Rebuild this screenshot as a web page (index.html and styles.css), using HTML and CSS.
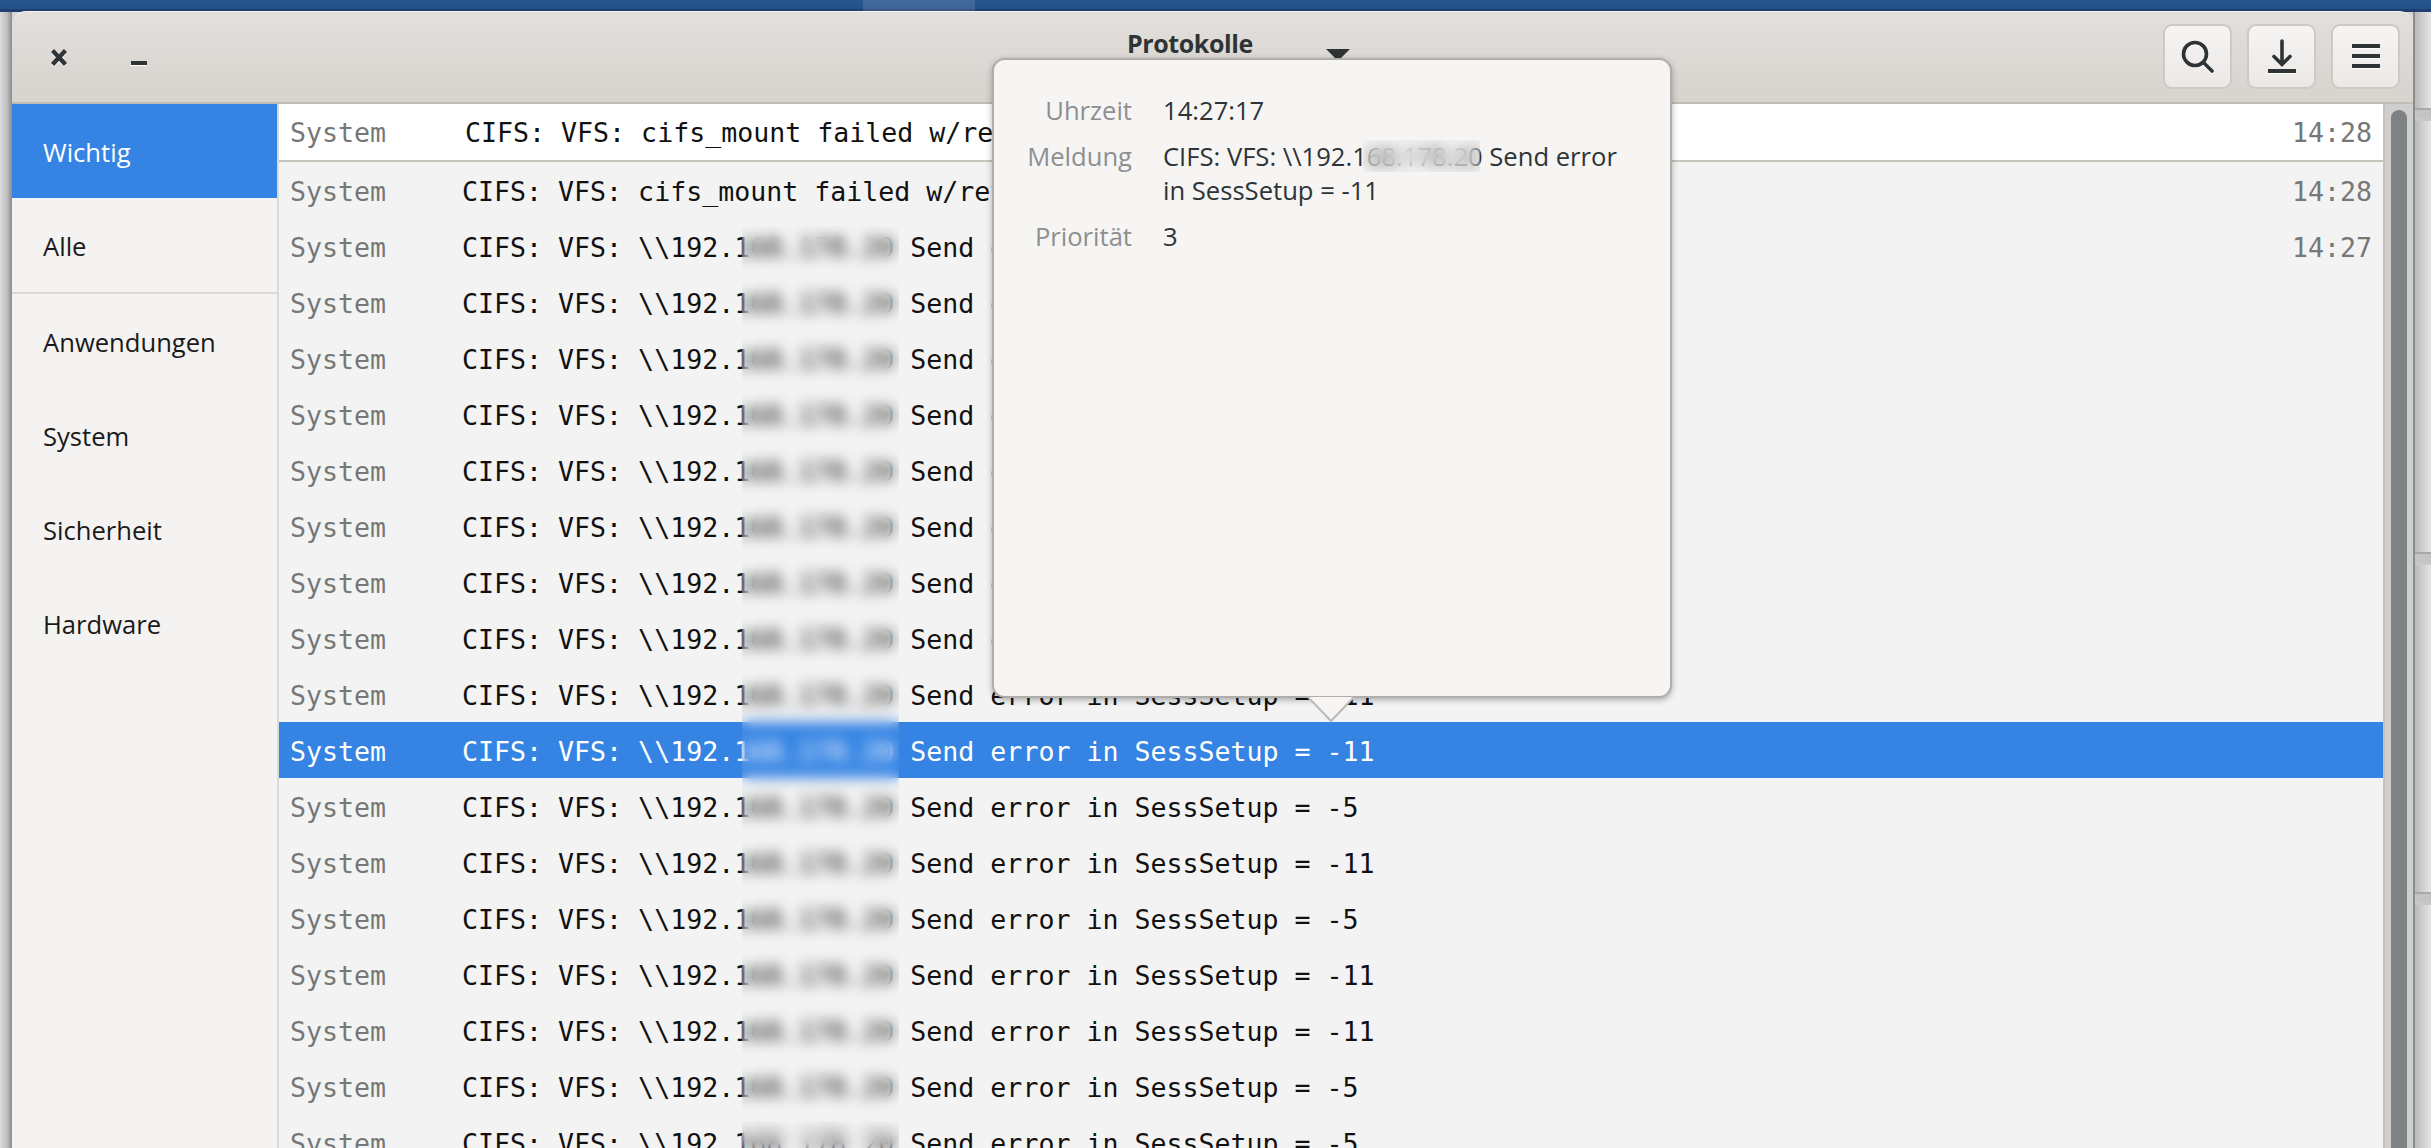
FILE: index.html
```html
<!DOCTYPE html>
<html lang="de">
<head>
<meta charset="utf-8">
<title>Protokolle</title>
<link rel="stylesheet" href="styles.css">
</head>
<body>
<div class="topbar"></div>
<div class="desk">
  <div class="edge-left"></div>
  <div class="window">
    <header class="header">
      <div class="wm">
        <svg class="wm-icon" width="16" height="17" viewBox="0 0 16 17"><path d="M1.5 1.5 14.5 15.5M14.5 1.5 1.5 15.5" fill="none" stroke="#2e3436" stroke-width="4.4"/></svg>
        <svg class="wm-icon" width="16" height="17" viewBox="0 0 16 17"><rect x="0" y="12" width="16" height="4" fill="#2e3436"/></svg>
      </div>
      <div class="title">Protokolle</div>
      <svg class="title-arrow" width="24" height="12" viewBox="0 0 24 12"><path d="M0 0H24L12 12Z" fill="#2e3436"/></svg>
      <div class="actions">
        <button class="btn"><svg width="36" height="36" viewBox="0 0 36 36"><circle cx="15" cy="15" r="11.5" fill="none" stroke="#2e3436" stroke-width="3.6"/><path d="M23.5 23.5 32 32" fill="none" stroke="#2e3436" stroke-width="3.6" stroke-linecap="round"/></svg></button>
        <button class="btn"><svg width="36" height="36" viewBox="0 0 36 36"><path d="M18 2V25M10 17.5 18 25.5 26 17.5" fill="none" stroke="#2e3436" stroke-width="3.6" stroke-linecap="round"/><rect x="4" y="30" width="28" height="4" fill="#2e3436"/></svg></button>
        <button class="btn"><svg width="36" height="36" viewBox="0 0 36 36"><path d="M4 5H32V9H4ZM4 15H32V19H4ZM4 25H32V29H4Z" fill="#2e3436"/></svg></button>
      </div>
    </header>
    <div class="main">
      <nav class="sidebar">
        <div class="side-item active">Wichtig</div>
        <div class="side-item">Alle</div>
        <div class="side-sep"></div>
        <div class="side-item">Anwendungen</div>
        <div class="side-item">System</div>
        <div class="side-item">Sicherheit</div>
        <div class="side-item">Hardware</div>
      </nav>
      <section class="list">
        <div class="row top"><span class="app">System</span><span class="msg">CIFS: VFS: cifs_mount failed w/return code = -11</span><span class="time">14:28</span></div>
        <div class="row"><span class="app">System</span><span class="msg">CIFS: VFS: cifs_mount failed w/return code = -11</span><span class="time">14:28</span></div>
        <div class="row"><span class="app">System</span><span class="msg">CIFS: VFS: \\192.168.178.20 Send error in SessSetup = -11</span><span class="time">14:27</span></div>
        <div class="row"><span class="app">System</span><span class="msg">CIFS: VFS: \\192.168.178.20 Send error in SessSetup = -11</span></div>
        <div class="row"><span class="app">System</span><span class="msg">CIFS: VFS: \\192.168.178.20 Send error in SessSetup = -5</span></div>
        <div class="row"><span class="app">System</span><span class="msg">CIFS: VFS: \\192.168.178.20 Send error in SessSetup = -11</span></div>
        <div class="row"><span class="app">System</span><span class="msg">CIFS: VFS: \\192.168.178.20 Send error in SessSetup = -5</span></div>
        <div class="row"><span class="app">System</span><span class="msg">CIFS: VFS: \\192.168.178.20 Send error in SessSetup = -11</span></div>
        <div class="row"><span class="app">System</span><span class="msg">CIFS: VFS: \\192.168.178.20 Send error in SessSetup = -5</span></div>
        <div class="row"><span class="app">System</span><span class="msg">CIFS: VFS: \\192.168.178.20 Send error in SessSetup = -11</span></div>
        <div class="row"><span class="app">System</span><span class="msg">CIFS: VFS: \\192.168.178.20 Send error in SessSetup = -11</span></div>
        <div class="row selected"><span class="app">System</span><span class="msg">CIFS: VFS: \\192.168.178.20 Send error in SessSetup = -11</span></div>
        <div class="row"><span class="app">System</span><span class="msg">CIFS: VFS: \\192.168.178.20 Send error in SessSetup = -5</span></div>
        <div class="row"><span class="app">System</span><span class="msg">CIFS: VFS: \\192.168.178.20 Send error in SessSetup = -11</span></div>
        <div class="row"><span class="app">System</span><span class="msg">CIFS: VFS: \\192.168.178.20 Send error in SessSetup = -5</span></div>
        <div class="row"><span class="app">System</span><span class="msg">CIFS: VFS: \\192.168.178.20 Send error in SessSetup = -11</span></div>
        <div class="row"><span class="app">System</span><span class="msg">CIFS: VFS: \\192.168.178.20 Send error in SessSetup = -11</span></div>
        <div class="row"><span class="app">System</span><span class="msg">CIFS: VFS: \\192.168.178.20 Send error in SessSetup = -5</span></div>
        <div class="row"><span class="app">System</span><span class="msg">CIFS: VFS: \\192.168.178.20 Send error in SessSetup = -5</span></div>
        <div class="list-blur"></div>
        <div class="list-blur tail"></div>
      </section>
      <div class="scroll"><div class="thumb"></div></div>
    </div>
  </div>
  <div class="edge-right">
    <div class="other o1"></div>
    <div class="other o2"></div>
    <div class="other o3"></div>
  </div>
</div>
<aside class="popover">
  <dl class="details">
    <dt>Uhrzeit</dt><dd>14:27:17</dd>
    <dt>Meldung</dt><dd>CIFS: VFS: \\192.168.178.20 Send error<br>in SessSetup = -11</dd>
    <dt>Priorität</dt><dd>3</dd>
  </dl>
  <div class="pop-blur"></div>
  <svg class="pop-arrow" width="50" height="26" viewBox="0 0 50 26"><path d="M2 0 25 24 48 0" fill="#f6f5f4" stroke="#bdbab6" stroke-width="2"/></svg>
</aside>
</body>
</html>
```
FILE: styles.css
```css
* { box-sizing: border-box; }
html, body { margin: 0; height: 100%; }
body {
  position: relative;
  width: 2431px;
  height: 1148px;
  overflow: hidden;
  display: flex;
  flex-direction: column;
  background: #d6d6d6;
  font-family: "Open Sans", "Noto Sans", sans-serif;
  font-size: 25.6px;
  color: #2e3436;
}
.topbar {
  height: 12px;
  flex: none;
  background:
    linear-gradient(90deg, transparent 863px, rgba(255, 255, 255, 0.12) 863px, rgba(255, 255, 255, 0.12) 975px, transparent 975px),
    linear-gradient(#28548f, #24508a 75%, #1f3f6e 75%);
}
.desk { flex: 1; display: flex; min-height: 0; }
.edge-left {
  width: 12px;
  flex: none;
  background: linear-gradient(90deg, #dcdcdc, #bdbdbd 60%, #8a8a8a);
}
.edge-right {
  position: relative;
  width: 18px;
  flex: none;
  border-left: 2px solid #8d8d8d;
  background: linear-gradient(90deg, #b9b9b9, #e6e6e6);
}
.other {
  position: absolute;
  left: 0;
  right: 0;
  height: 13px;
  border-top: 2px solid #a8a8a8;
  border-bottom: 2px solid #c9c9c9;
  background: #c4c4c4;
}
.o1 { top: 96px; }
.o2 { top: 540px; }
.o3 { top: 880px; }
.window {
  width: 2401px;
  flex: none;
  display: flex;
  flex-direction: column;
  min-height: 0;
}
.header {
  position: relative;
  height: 93px;
  flex: none;
  display: flex;
  align-items: flex-start;
  margin-top: -1px;
  border-top: 1px solid #f4f3f1;
  border-bottom: 2px solid #c2bcb5;
  border-radius: 14px 14px 0 0;
  background: linear-gradient(#e2dfdc, #d7d3ce);
}
.wm {
  width: 1115px;
  flex: none;
  display: flex;
  gap: 64px;
  padding: 37px 0 0 39px;
}
.wm-icon { display: block; filter: drop-shadow(0 1.5px 0 #fff); }
.title {
  margin-top: 14px;
  font-size: 25px;
  line-height: 34px;
  font-weight: 700;
  letter-spacing: -0.4px;
}
.title-arrow { margin: 37px 0 0 73px; flex: none; }
.actions {
  margin: 12px 13px 0 auto;
  display: flex;
  gap: 15px;
}
.btn {
  width: 69px;
  height: 65px;
  padding: 0;
  display: flex;
  align-items: center;
  justify-content: center;
  border: 2px solid #cfc9c3;
  border-radius: 9px;
  background: linear-gradient(#f6f5f4, #ebe8e5);
}
.btn svg { filter: drop-shadow(0 1px 0 #fff); }
.main { flex: 1; display: flex; min-height: 0; }
.sidebar {
  width: 267px;
  flex: none;
  border-right: 2px solid #dcdad7;
  background: #f4f3f2;
}
.side-item {
  height: 94px;
  padding: 2px 0 0 31px;
  display: flex;
  align-items: center;
  color: #1a1a1a;
}
.side-item.active { background: #3584e4; color: #fff; }
.side-sep { height: 2px; background: #dcdad7; }
.list {
  position: relative;
  flex: 1;
  min-width: 0;
  background: #f3f3f3;
  font-family: "DejaVu Sans Mono", monospace;
  font-size: 26.6px;
  overflow: hidden;
}
.row {
  height: 56px;
  padding: 2px 11px 0;
  display: flex;
  align-items: center;
  white-space: pre;
  color: #111;
}
.row.top {
  height: 58px;
  padding-top: 2px;
  padding-bottom: 2px;
  background: #fff;
  border-bottom: 2px solid #c8c3bc;
}
.app { width: 172px; flex: none; color: #777; }
.row.top .app { width: 175px; }
.msg { flex: none; }
.time { margin-left: auto; color: #777; }
.row.selected { background: #3584e4; color: #fff; }
.row.selected .app { color: #fff; }
.list-blur {
  position: absolute;
  left: 463px;
  width: 157px;
  top: 122px;
  bottom: 0;
  backdrop-filter: blur(7px);
}
.list-blur.tail { top: auto; height: 26px; backdrop-filter: blur(6px); }
.scroll {
  width: 30px;
  flex: none;
  padding: 6px 6px 0 6px;
  border-left: 2px solid #c8c3bc;
  background: #cfcfcf;
}
.thumb {
  width: 16px;
  height: 100%;
  border-radius: 8px 8px 0 0;
  background: #7e8283;
}
.popover {
  position: absolute;
  left: 992px;
  top: 58px;
  width: 680px;
  height: 640px;
  padding: 34px 20px 0 18px;
  background: #f6f5f4;
  border: 2px solid #b0aeaa;
  border-radius: 13px;
  box-shadow: 0 2px 6px rgba(0, 0, 0, 0.3);
}
.details {
  margin: 0;
  display: grid;
  grid-template-columns: 120px 1fr;
  column-gap: 31px;
  row-gap: 12px;
  line-height: 34px;
}
.details dt { text-align: right; color: #8c8f90; }
.details dd { margin: 0; white-space: nowrap; }
.pop-blur {
  position: absolute;
  left: 369px;
  top: 80px;
  width: 117px;
  height: 32px;
  backdrop-filter: blur(8px);
}
.pop-arrow {
  position: absolute;
  left: 312px;
  top: 637px;
}
```
